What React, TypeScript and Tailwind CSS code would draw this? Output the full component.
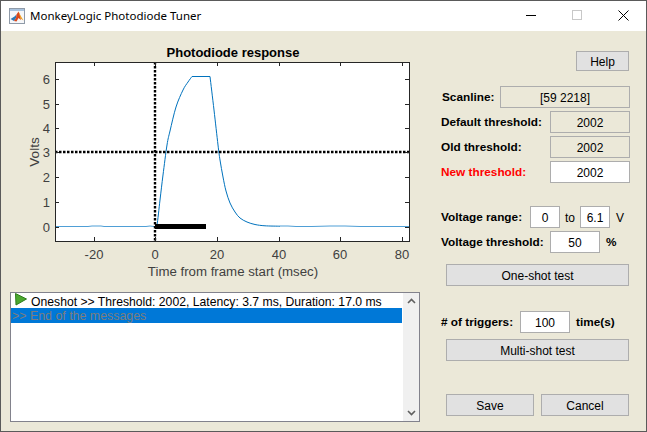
import type { ReactNode } from "react";

const uiFont = "font-['Liberation_Sans',Arial,sans-serif]";

const xTicks = [
  { x: 94, label: "-20" },
  { x: 155, label: "0" },
  { x: 217, label: "20" },
  { x: 279, label: "40" },
  { x: 340, label: "60" },
  { x: 402, label: "80" },
];
const yTicks = [
  { y: 227, label: "0" },
  { y: 202, label: "1" },
  { y: 177, label: "2" },
  { y: 152, label: "3" },
  { y: 128, label: "4" },
  { y: 104, label: "5" },
  { y: 79, label: "6" },
];

type Pt = [number, number];

// catmull-rom through the points so the trace doesn't look faceted
const smooth = (pts: Pt[]) => {
  let d = `M${pts[0][0]} ${pts[0][1]}`;
  for (let i = 0; i < pts.length - 1; i++) {
    const p0 = pts[i - 1] ?? pts[i];
    const p1 = pts[i];
    const p2 = pts[i + 1];
    const p3 = pts[i + 2] ?? p2;
    const c1x = p1[0] + (p2[0] - p0[0]) / 6;
    const c1y = p1[1] + (p2[1] - p0[1]) / 6;
    const c2x = p2[0] - (p3[0] - p1[0]) / 6;
    const c2y = p2[1] - (p3[1] - p1[1]) / 6;
    d += ` C${c1x} ${c1y} ${c2x} ${c2y} ${p2[0]} ${p2[1]}`;
  }
  return d;
};

const rise: Pt[] = [
  [155, 227],
  [157, 225],
  [160, 200],
  [163, 175],
  [167, 145],
  [170, 131],
  [176, 107],
  [183, 90],
  [188, 82],
  [192, 76.5],
];
const fall: Pt[] = [
  [210, 76.5],
  [214, 110],
  [218, 145],
  [220, 160],
  [223, 177],
  [226, 191],
  [230, 203],
  [235, 212],
  [240, 218],
  [247, 222],
  [255, 224.5],
  [265, 225.8],
  [280, 226.2],
];

const MatlabIcon = () => (
  <svg width="16" height="16" viewBox="0 0 16 16" className="shrink-0">
    <rect x="0.5" y="0.5" width="15" height="15" fill="#f6f7f9" stroke="#8f9aa8" />
    <rect x="1" y="1" width="14" height="2" fill="#a9c3de" />
    <path d="M1.5 11 L5.5 8.5 L7.5 6.5 L7 10 L5 13 Z" fill="#2c78b8" />
    <path d="M7.5 6.5 L9.5 3.5 L11 7 L12 12 L9.5 10 L7.5 13.5 L5 13 L7 10 Z" fill="#d9481c" />
    <path d="M9.5 3.5 L11.5 7.5 L14.5 12.5 L11.5 10.5 L10.5 7 Z" fill="#f0a020" />
  </svg>
);

const PlotAxes = () => (
  <svg width="432" height="259" viewBox="0 31 432 259" className="block">
    <text x="233" y="57" textAnchor="middle" fontFamily="Liberation Sans" fontSize="13" fontWeight="700" fill="#000">
      Photodiode response
    </text>
    <rect x="55.5" y="62.5" width="354" height="179" fill="#fff" />

    {/* baseline noise sits under a pixel, so it reads lighter than the pulse */}
    <path
      d="M55 226.5 L88 226.5 L92 226 L101 226 L104 226.5 L146 226.5 L150 226 L154 226.5 M280 226 L288 226 L296 226.5 L296 226.5 L312 226.5 L330 226 L345 226 L360 226.5 L409 226.5"
      fill="none"
      stroke="#4f9fd6"
      strokeWidth="1"
    />
    <path d={smooth(rise)} fill="none" stroke="#0072BD" strokeWidth="1" />
    <path d="M192 76.5 L210 76.5" fill="none" stroke="#0072BD" strokeWidth="1" />
    <path d={smooth(fall)} fill="none" stroke="#0072BD" strokeWidth="1" />

    <rect x="155" y="224" width="51" height="5" fill="#000" />
    <line x1="155" y1="62" x2="155" y2="241" stroke="#000" strokeWidth="2.4" strokeDasharray="2.5 1.5" />
    <line x1="55" y1="152" x2="409" y2="152" stroke="#000" strokeWidth="2.4" strokeDasharray="2.5 1.5" />

    <g shapeRendering="crispEdges" stroke="#262626" strokeWidth="1">
      <rect x="55.5" y="62.5" width="354" height="179" fill="none" />
      {xTicks.map((t) => (
        <g key={t.label}>
          <line x1={t.x + 0.5} y1="62" x2={t.x + 0.5} y2="66" />
          <line x1={t.x + 0.5} y1="241" x2={t.x + 0.5} y2="237" />
        </g>
      ))}
      {yTicks.map((t) => (
        <g key={t.label}>
          <line x1="55" y1={t.y + 0.5} x2="59" y2={t.y + 0.5} />
          <line x1="409" y1={t.y + 0.5} x2="405" y2={t.y + 0.5} />
        </g>
      ))}
    </g>

    <g fontFamily="Liberation Sans" fontSize="13" fill="#404040">
      {xTicks.map((t) => (
        <text key={t.label} x={t.x} y="259" textAnchor="middle">
          {t.label}
        </text>
      ))}
      {yTicks.map((t) => (
        <text key={t.label} x="50" y={t.y + 5} textAnchor="end">
          {t.label}
        </text>
      ))}
      <text x="233" y="276" textAnchor="middle" fontSize="13.25">
        Time from frame start (msec)
      </text>
      <text transform="translate(39 152) rotate(-90)" textAnchor="middle" fontSize="13.5">
        Volts
      </text>
    </g>
  </svg>
);

const MessageList = () => (
  <div className="ml-[10px] flex h-[130px] w-[410px] border border-[#82828c] bg-white">
    <div className="min-w-0 flex-1">
      <div className="flex h-[15px] items-start pl-[4px]">
        <svg width="12" height="13" viewBox="0 0 12 13" className="shrink-0">
          <path d="M0.5 0.5 L11.5 6 L1 12 Z" fill="#4ca82e" stroke="#2f7d1d" strokeWidth="1" />
        </svg>
        <span className="ml-[4px] mt-[2px] whitespace-nowrap text-[12.2px] leading-[14px] text-black">
          Oneshot &gt;&gt; Threshold: 2002, Latency: 3.7 ms, Duration: 17.0 ms
        </span>
      </div>
      <div className="flex h-[15px] items-center bg-[#0078d7] pl-[1px] pt-[1px] text-[12.4px] text-[#7d7d7d]">
        &gt;&gt; End of the messages
      </div>
    </div>
    <div className="ml-px flex w-[16px] flex-col items-center justify-between bg-[#f0f0f0] py-[5px]">
      <svg width="9" height="6" viewBox="0 0 9 6">
        <path d="M1 5 L4.5 1.5 L8 5" fill="none" stroke="#606060" strokeWidth="1.6" />
      </svg>
      <svg width="9" height="6" viewBox="0 0 9 6">
        <path d="M1 1 L4.5 4.5 L8 1" fill="none" stroke="#606060" strokeWidth="1.6" />
      </svg>
    </div>
  </div>
);

const Field = ({ value, width, white }: { value: string; width: string; white?: boolean }) => (
  <div
    className={`flex h-[22px] shrink-0 items-center justify-center border border-[#adadad] pt-[2px] text-[12px] font-normal text-black ${width} ${
      white ? "bg-white" : ""
    }`}
  >
    {value}
  </div>
);

const Btn = ({ label, className }: { label: string; className: string }) => (
  <button className={`flex items-center justify-center border border-[#adadad] bg-[#e1e1e1] pt-[2px] text-[12px] font-normal text-black ${className}`}>
    {label}
  </button>
);

const Label = ({ children, className }: { children: ReactNode; className?: string }) => (
  <span className={`pt-[2px] text-[11.8px] font-bold ${className ?? ""}`}>{children}</span>
);

const SettingsPanel = () => (
  <div className="flex w-[214px] flex-col text-black">
    <Btn label="Help" className="ml-[144px] mt-[20px] h-[20px] w-[53px]" />

    <div className="mt-[15px] flex h-[22px] items-center pl-[10px]">
      <Label className="w-[58px]">Scanline:</Label>
      <Field value="[59 2218]" width="w-[130px]" />
    </div>
    <div className="mt-[3px] flex h-[22px] items-center pl-[9px]">
      <Label className="w-[109px]">Default threshold:</Label>
      <Field value="2002" width="w-[80px]" />
    </div>
    <div className="mt-[3px] flex h-[22px] items-center pl-[9px]">
      <Label className="w-[109px]">Old threshold:</Label>
      <Field value="2002" width="w-[80px]" />
    </div>
    <div className="mt-[3px] flex h-[22px] items-center pl-[9px]">
      <Label className="w-[109px] text-[#ff0000]">New threshold:</Label>
      <Field value="2002" width="w-[80px]" white />
    </div>

    <div className="mt-[23px] flex h-[22px] items-center pl-[9px]">
      <Label className="w-[89px]">Voltage range:</Label>
      <Field value="0" width="w-[30px]" white />
      <span className="w-[20px] pt-[2px] text-center text-[12px]">to</span>
      <Field value="6.1" width="w-[30px]" white />
      <span className="ml-[6px] pt-[2px] text-[12px]">V</span>
    </div>
    <div className="mt-[3px] flex h-[22px] items-center pl-[9px]">
      <Label className="w-[109px]">Voltage threshold:</Label>
      <Field value="50" width="w-[50px]" white />
      <Label className="ml-[6px]">%</Label>
    </div>
    <Btn label="One-shot test" className="ml-[14px] mt-[11px] h-[22px] w-[183px]" />

    <div className="mt-[25px] flex h-[22px] items-center pl-[9px]">
      <Label className="w-[79px]"># of triggers:</Label>
      <Field value="100" width="w-[50px]" white />
      <Label className="ml-[6px]">time(s)</Label>
    </div>
    <Btn label="Multi-shot test" className="ml-[14px] mt-[6px] h-[22px] w-[183px]" />

    <div className="ml-[14px] mt-[33px] flex gap-[7px]">
      <Btn label="Save" className="h-[22px] w-[88px]" />
      <Btn label="Cancel" className="h-[22px] w-[88px]" />
    </div>
  </div>
);

const App = () => {
  return (
    <div className={`flex h-[432px] w-[647px] flex-col overflow-hidden border border-[#5a5a5a] bg-[#ebe8d8] ${uiFont}`}>
      {/* title bar */}
      <div className="flex h-[30px] shrink-0 items-center bg-white pl-[8px]">
        <MatlabIcon />
        <span className="ml-[5px] whitespace-nowrap font-['Noto_Sans',sans-serif] text-[11.5px] text-black">
          MonkeyLogic Photodiode Tuner
        </span>
        <div className="ml-auto flex h-full items-center pb-[2px]">
          <div className="flex w-[46px] justify-center">
            <div className="h-px w-[10px] bg-black" />
          </div>
          <div className="flex w-[46px] justify-center">
            <div className="h-[10px] w-[10px] border border-[#c8c8c8]" />
          </div>
          <div className="flex w-[46px] justify-center">
            <svg width="11" height="11" viewBox="0 0 11 11">
              <path d="M0.5 0.5 L10.5 10.5 M10.5 0.5 L0.5 10.5" stroke="#000" strokeWidth="1" />
            </svg>
          </div>
        </div>
      </div>

      <div className="flex flex-1">
        <div className="flex w-[431px] flex-col">
          <div className="-ml-px">
            <PlotAxes />
          </div>
          <div className="-ml-px mt-[2px]">
            <MessageList />
          </div>
        </div>
        <SettingsPanel />
      </div>
    </div>
  );
};

export default App;
